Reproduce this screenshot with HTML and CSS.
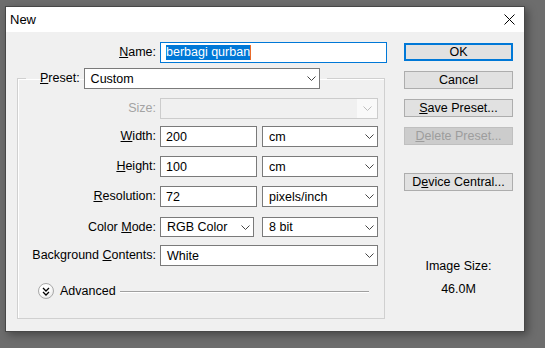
FILE: index.html
```html
<!DOCTYPE html>
<html lang="en">
<head>
  <meta charset="UTF-8">
  <meta name="viewport" content="width=device-width, initial-scale=1.0">
  <title>New</title>
  <link rel="stylesheet" href="styles.css">
</head>
<body>

  <div class="window">
    <!-- Title bar -->
    <div class="titlebar">
      <span class="title">New</span>
      <svg class="close" width="11" height="11" viewBox="0 0 11 11">
        <path d="M0.5 0.5 L10.5 10.5 M10.5 0.5 L0.5 10.5" stroke="#000" stroke-width="1" fill="none"/>
      </svg>
    </div>

    <div class="dialog">
      <!-- Left: the form -->
      <div class="form">
        <div class="name-row">
          <label class="lbl name-lbl"><u>N</u>ame:</label>
          <div class="field name-field"><span class="selected">berbagi qurban</span><span class="caret"></span></div>
        </div>

        <fieldset class="group">
          <legend class="preset">
            <label class="lbl"><u>P</u>reset:</label>
            <div class="field dropdown preset-select">
              <span>Custom</span>
              <svg class="chev" width="9" height="5" viewBox="0 0 9 5"><path d="M0.5 0.5 L4.5 4.5 L8.5 0.5" stroke="#444" fill="none"/></svg>
            </div>
          </legend>

          <div class="grid">
            <label class="lbl disabled">Size:</label>
            <div class="field dropdown off wide">
              <span></span>
              <span class="off-arrow"><svg class="chev" width="9" height="5" viewBox="0 0 9 5"><path d="M0.5 0.5 L4.5 4.5 L8.5 0.5" stroke="#bdbdbd" fill="none"/></svg></span>
            </div>

            <label class="lbl"><u>W</u>idth:</label>
            <div class="field num">200</div>
            <div class="field dropdown">
              <span>cm</span>
              <svg class="chev" width="9" height="5" viewBox="0 0 9 5"><path d="M0.5 0.5 L4.5 4.5 L8.5 0.5" stroke="#444" fill="none"/></svg>
            </div>

            <label class="lbl"><u>H</u>eight:</label>
            <div class="field num">100</div>
            <div class="field dropdown">
              <span>cm</span>
              <svg class="chev" width="9" height="5" viewBox="0 0 9 5"><path d="M0.5 0.5 L4.5 4.5 L8.5 0.5" stroke="#444" fill="none"/></svg>
            </div>

            <label class="lbl"><u>R</u>esolution:</label>
            <div class="field num">72</div>
            <div class="field dropdown">
              <span>pixels/inch</span>
              <svg class="chev" width="9" height="5" viewBox="0 0 9 5"><path d="M0.5 0.5 L4.5 4.5 L8.5 0.5" stroke="#444" fill="none"/></svg>
            </div>

            <label class="lbl">Color <u>M</u>ode:</label>
            <div class="field dropdown mode color-mode">
              <span>RGB Color</span>
              <svg class="chev" width="9" height="5" viewBox="0 0 9 5"><path d="M0.5 0.5 L4.5 4.5 L8.5 0.5" stroke="#444" fill="none"/></svg>
            </div>
            <div class="field dropdown mode">
              <span>8 bit</span>
              <svg class="chev" width="9" height="5" viewBox="0 0 9 5"><path d="M0.5 0.5 L4.5 4.5 L8.5 0.5" stroke="#444" fill="none"/></svg>
            </div>

            <label class="lbl">Background <u>C</u>ontents:</label>
            <div class="field dropdown wide">
              <span>White</span>
              <svg class="chev" width="9" height="5" viewBox="0 0 9 5"><path d="M0.5 0.5 L4.5 4.5 L8.5 0.5" stroke="#444" fill="none"/></svg>
            </div>
          </div>

          <div class="advanced">
            <span class="adv-btn">
              <svg width="8" height="9" viewBox="0 0 8 9"><path d="M1 1 L4 4 L7 1 M1 5 L4 8 L7 5" stroke="#000" stroke-width="1.3" fill="none"/></svg>
            </span>
            <span class="adv-text">Advanced</span>
            <span class="adv-line"></span>
          </div>
        </fieldset>
      </div>

      <!-- Right: buttons -->
      <div class="side">
        <button class="btn default">OK</button>
        <button class="btn">Cancel</button>
        <button class="btn"><u>S</u>ave Preset...</button>
        <button class="btn off"><u>D</u>elete Preset...</button>
        <button class="btn device">D<u>e</u>vice Central...</button>

        <div class="image-size">
          <p>Image Size:</p>
          <p>46.0M</p>
        </div>
      </div>
    </div>
  </div>

</body>
</html>
```

FILE: styles.css
```css
body {
  margin: 0;
  background: #6d6d6d;
  font-family: "Liberation Sans", Arial, sans-serif;
  font-size: 12.5px;
  color: #000;
  height: 348px;
  overflow: hidden;
}

/* Window frame */
.window {
  margin: 6px 0 0 5px;
  width: 520px;
  height: 326px;
  box-sizing: border-box;
  border: 1px solid #474747;
  background: #f0f0f0;
  box-shadow: 3px 3px 8px rgba(0, 0, 0, 0.35);
}
.titlebar {
  height: 25px;
  background: #fff;
  display: flex;
  align-items: center;
  justify-content: space-between;
  padding: 0 9px 0 4px;
}
.title {
  font-size: 13px;
}
.close {
  display: block;
}

/* Dialog body */
.dialog {
  display: flex;
  padding-top: 10px;
}
.form {
  width: 381px;
}
.lbl {
  line-height: 21px;
  white-space: nowrap;
}
.lbl.disabled {
  color: #a3a3a3;
}
.name-row {
  display: flex;
  gap: 4px;
}
.name-lbl {
  width: 150px;
  text-align: right;
}

/* Inputs and dropdowns */
.field {
  height: 21px;
  box-sizing: border-box;
  border: 1px solid #7a7a7a;
  background: #fff;
  padding: 0 5px;
  display: flex;
  align-items: center;
  white-space: nowrap;
}
.dropdown {
  justify-content: space-between;
  padding-right: 3px;
  padding-left: 6px;
}
.chev {
  display: block;
}
.name-field {
  width: 227px;
  border-color: #0078d7;
}
.selected {
  background: #0078d7;
  color: #fff;
  line-height: 15px;
}
.caret {
  width: 1px;
  height: 15px;
  background: #e86a2a;
}
.num {
  width: 97px;
}
.mode {
  height: 20px;
}
.color-mode {
  width: 94px;
}
.off {
  border-color: #cccccc;
  background: #f0f0f0;
  padding-right: 0;
}
.off-arrow {
  height: 19px;
  width: 20px;
  display: flex;
  align-items: center;
  justify-content: center;
  background: #f9f9f9;
}

/* Group box */
.group {
  margin: 5px 0 0 11px;
  width: 368px;
  box-sizing: border-box;
  padding: 9px 5px 19px 8px;
  border: 1px solid #d0d0d0;
  box-shadow: inset 1px 1px #fff;
  min-width: 0;
}
.preset {
  display: flex;
  align-items: center;
  gap: 4px;
  padding: 0 7px 0 14px;
}
.preset-select {
  width: 236px;
}
.grid {
  display: grid;
  grid-template-columns: 130px 98px 116px;
  grid-template-rows: 28px 30px 30px 31px 28px 21px;
  column-gap: 4px;
  align-items: start;
}
.grid .lbl {
  text-align: right;
}
.grid .wide {
  grid-column: 2 / 4;
}

/* Advanced toggle */
.advanced {
  display: flex;
  align-items: center;
  height: 16px;
  margin: 17px 0 0 12px;
}
.adv-btn {
  width: 16px;
  height: 16px;
  box-sizing: border-box;
  border: 1px solid #a9a9a9;
  border-radius: 50%;
  background: radial-gradient(circle at 40% 35%, #fff 40%, #dcdcdc 100%);
  display: flex;
  align-items: center;
  justify-content: center;
}
.adv-btn svg {
  display: block;
}
.adv-text {
  margin-left: 6px;
}
.adv-line {
  flex: 1;
  height: 1px;
  background: #a0a0a0;
  box-shadow: 0 1px #fff;
  margin: 1px 10px 0 4px;
}

/* Buttons column */
.side {
  margin-left: 17px;
  padding-top: 1px;
  width: 109px;
  display: flex;
  flex-direction: column;
}
.btn {
  height: 18px;
  margin: 0 0 10px;
  padding: 0;
  box-sizing: border-box;
  border: 1px solid #adadad;
  background: #e1e1e1;
  font-family: inherit;
  font-size: 12.5px;
  color: #000;
  line-height: 16px;
}
.btn.default {
  border: 2px solid #0078d7;
  line-height: 14px;
}
.btn.off {
  background: #cccccc;
  border-color: #bfbfbf;
  color: #9d9d9d;
}
.btn.device {
  margin-top: 18px;
}
.image-size {
  margin-top: 58px;
  text-align: center;
}
.image-size p {
  margin: 0 0 8px;
  line-height: 15px;
}
```
